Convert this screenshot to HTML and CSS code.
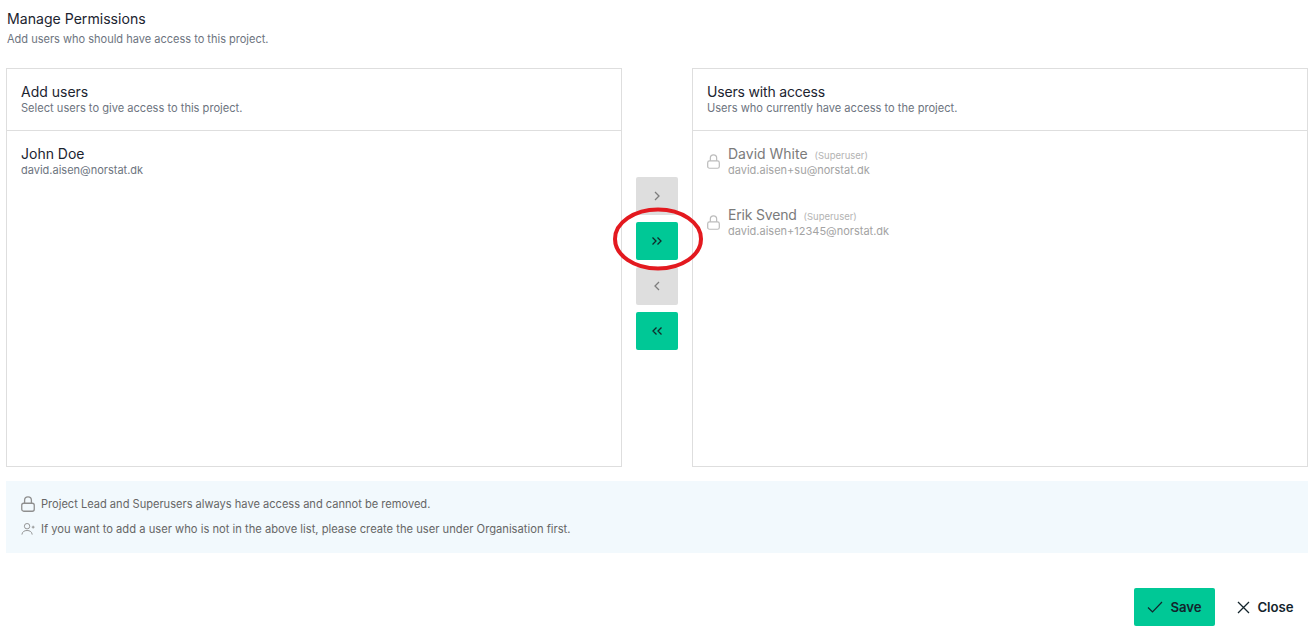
FILE: index.html
```html
<!DOCTYPE html>
<html lang="en">
<head>
<meta charset="utf-8">
<title>Manage Permissions</title>
<link rel="stylesheet" href="styles.css">
</head>
<body>
<svg class="defs" width="0" height="0" aria-hidden="true">
  <symbol id="lock" viewBox="0 0 14 16"><rect x="0.75" y="7.25" width="12.5" height="8" rx="2" fill="none" stroke="currentColor" stroke-width="1.3"/><path d="M3.600 7.250V4.300a3.400 3.400 0 0 1 6.800 0v2.950" fill="none" stroke="currentColor" stroke-width="1.3"/></symbol>
</svg>
<main class="page">
  <header class="head">
    <h1 class="title">Manage Permissions</h1>
    <p class="sub">Add users who should have access to this project.</p>
  </header>
  <section class="transfer">
    <div class="panel">
      <div class="panel-head">
        <h2 class="panel-title">Add users</h2>
        <p class="panel-sub">Select users to give access to this project.</p>
      </div>
      <ul class="users">
        <li class="user">
          <div class="user-text">
            <div class="user-name">John Doe</div>
            <div class="user-mail">david.aisen@norstat.dk</div>
          </div>
        </li>
      </ul>
    </div>
    <div class="moves">
      <button class="move off" type="button"><svg width="10" height="10" viewBox="0 0 10 10"><path d="M3 1l4 4-4 4" fill="none" stroke="currentColor" stroke-width="1.3"/></svg></button>
      <button class="move on" type="button"><svg width="12" height="10" viewBox="0 0 12 10"><path d="M1.500 1.500l3.500 3.500-3.500 3.500M6.500 1.500l3.500 3.500-3.500 3.500" fill="none" stroke="currentColor" stroke-width="1.3"/></svg></button>
      <button class="move off" type="button"><svg width="10" height="10" viewBox="0 0 10 10"><path d="M7 1L3 5l4 4" fill="none" stroke="currentColor" stroke-width="1.3"/></svg></button>
      <button class="move on" type="button"><svg width="12" height="10" viewBox="0 0 12 10"><path d="M5.500 1.500L2 5l3.500 3.500M10.500 1.500L7 5l3.500 3.500" fill="none" stroke="currentColor" stroke-width="1.3"/></svg></button>
      <svg class="ring" width="90" height="64" viewBox="0 0 90 64"><ellipse cx="45" cy="32" rx="43" ry="29.500" fill="none" stroke="#e3191f" stroke-width="4"/></svg>
    </div>
    <div class="panel">
      <div class="panel-head">
        <h2 class="panel-title tight">Users with access</h2>
        <p class="panel-sub">Users who currently have access to the project.</p>
      </div>
      <ul class="users">
        <li class="user locked">
          <svg class="lock" width="13" height="15"><use href="#lock"/></svg>
          <div class="user-text">
            <div class="user-name">David White <span class="role">(Superuser)</span></div>
            <div class="user-mail">david.aisen+su@norstat.dk</div>
          </div>
        </li>
        <li class="user locked">
          <svg class="lock" width="13" height="15"><use href="#lock"/></svg>
          <div class="user-text">
            <div class="user-name tight">Erik Svend <span class="role">(Superuser)</span></div>
            <div class="user-mail">david.aisen+12345@norstat.dk</div>
          </div>
        </li>
      </ul>
    </div>
  </section>
  <section class="notice">
    <p class="note short"><svg class="note-icon" width="14" height="16"><use href="#lock"/></svg>Project Lead and Superusers always have access and cannot be removed.</p>
    <p class="note"><svg class="note-icon" width="14" height="14" viewBox="0 0 15 14"><circle cx="6.500" cy="4" r="2.900" fill="none" stroke="currentColor" stroke-width="1"/><path d="M1 13c.3-3 2.500-4.400 5.500-4.400S11.700 10 12 13M11.500 5h3M13 3.500v3" fill="none" stroke="currentColor" stroke-width="1"/></svg>If you want to add a user who is not in the above list, please create the user under Organisation first.</p>
  </section>
  <footer class="actions">
    <button class="btn save" type="button"><svg width="16" height="12" viewBox="0 0 16 12"><path d="M1 6.500l4.500 4.500L15 1" fill="none" stroke="currentColor" stroke-width="1.200"/></svg>Save</button>
    <button class="btn close" type="button"><svg width="13" height="13" viewBox="0 0 13 13"><path d="M1 1l11 11M12 1L1 12" fill="none" stroke="currentColor" stroke-width="1.300"/></svg>Close</button>
  </footer>
</main>
</body>
</html>
```
FILE: styles.css
```css
* { box-sizing: border-box; }
html, body { margin: 0; padding: 0; background: #fff; }
body { font-family: Inter, "Liberation Sans", sans-serif; color: #1c2430; overflow: hidden; height: 626px; }
.defs { position: absolute; }
.page { width: 1316px; padding: 0 8px 0 6px; display: flex; flex-direction: column; }
.head { height: 68px; padding: 10px 0 0 1px; }
.title { margin: 0; font-size: 14.100px; line-height: 17px; font-weight: 400; }
.sub { margin: 5px 0 0; font-size: 11.020px; line-height: 14px; color: #6d7480; }
.transfer { display: flex; height: 399px; }
.panel { width: 616px; border: 1px solid #dedede; display: flex; flex-direction: column; }
.panel-head { height: 62px; padding: 14px 14px 0; border-bottom: 1px solid #dedede; }
.panel-title { margin: 0; font-size: 14px; line-height: 17px; font-weight: 400; }
.panel-sub { margin: 1px 0 0; font-size: 11.100px; line-height: 14px; color: #6d7480; }
.tight { letter-spacing: -0.18px; }
.tight .role { letter-spacing: 0; }
.users { list-style: none; margin: 0; padding: 14px 14px 0; display: flex; flex-direction: column; gap: 29px; }
.user { display: flex; align-items: center; height: 32px; }
.user-name { font-size: 14px; line-height: 17px; }
.user-mail { font-size: 11px; line-height: 14px; margin-top: 1px; color: #6d7480; }
.locked .user-name { color: #7b7b7b; }
.locked .user-mail { color: #a3a3a3; }
.lock { color: #bcbcbc; margin-right: 8px; flex: none; }
.role { font-size: 9.500px; line-height: 1; color: #b3b3b3; margin-left: 3px; }
.moves { position: relative; width: 70px; display: flex; flex-direction: column; align-items: center; gap: 7px; padding-top: 109px; }
.move { width: 42px; height: 38px; flex: none; border: 0; padding: 0; border-radius: 2px; display: flex; align-items: center; justify-content: center; }
.move.off { background: #dedede; color: #7d7d7d; }
.move.on { background: #00c896; color: #102a2a; }
.ring { position: absolute; left: -9px; top: 139px; }
.notice { margin-top: 14px; height: 72px; background: #f2f9fd; padding: 15px 15px 0; color: #666; }
.note { margin: 0 0 9px; display: flex; align-items: center; height: 16px; font-size: 11.200px; }
.note.short { font-size: 11.080px; }
.note-icon { color: #8f8f8f; margin-right: 6px; flex: none; }
.actions { display: flex; justify-content: flex-end; margin-top: 35px; height: 38px; }
.btn { border: 0; height: 38px; font: 600 13.200px Inter, "Liberation Sans", sans-serif; display: flex; align-items: center; gap: 7px; color: #13242c; border-radius: 2px; }
.save { width: 81px; background: #00c896; justify-content: center; }
.close { background: none; margin-left: 8px; width: 85px; justify-content: center; padding: 0; }
```
